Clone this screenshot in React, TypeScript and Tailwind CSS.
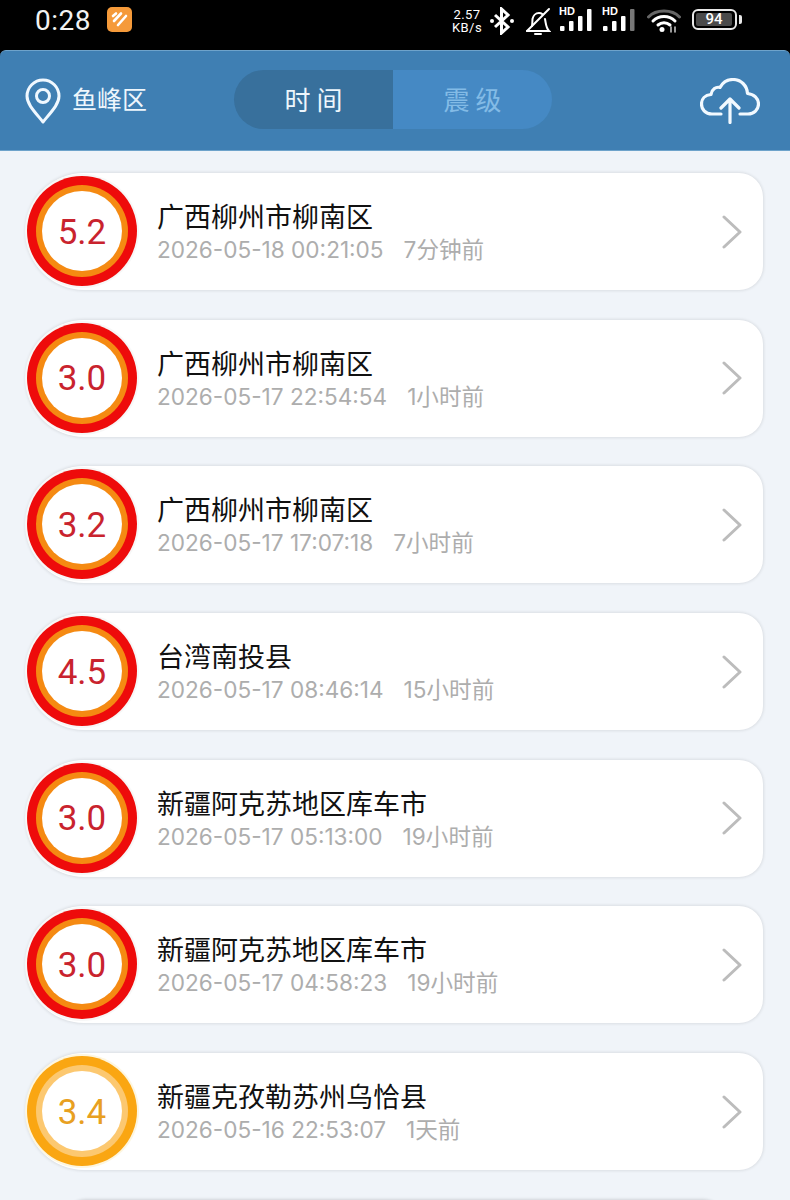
import React from "react";

const FONT = "font-['Roboto','Noto_Sans_CJK_SC',sans-serif]";

type Quake = {
  mag: string;
  place: string;
  time: string;
  ago: string;
  level: "red" | "amber";
};

const quakes: Quake[] = [
  { mag: "5.2", place: "广西柳州市柳南区", time: "2026-05-18 00:21:05", ago: "7分钟前", level: "red" },
  { mag: "3.0", place: "广西柳州市柳南区", time: "2026-05-17 22:54:54", ago: "1小时前", level: "red" },
  { mag: "3.2", place: "广西柳州市柳南区", time: "2026-05-17 17:07:18", ago: "7小时前", level: "red" },
  { mag: "4.5", place: "台湾南投县", time: "2026-05-17 08:46:14", ago: "15小时前", level: "red" },
  { mag: "3.0", place: "新疆阿克苏地区库车市", time: "2026-05-17 05:13:00", ago: "19小时前", level: "red" },
  { mag: "3.0", place: "新疆阿克苏地区库车市", time: "2026-05-17 04:58:23", ago: "19小时前", level: "red" },
  { mag: "3.4", place: "新疆克孜勒苏州乌恰县", time: "2026-05-16 22:53:07", ago: "1天前", level: "amber" },
];

const Signal = ({ dim }: { dim?: boolean }) => (
  <div className="relative w-[36px] h-[26px]">
    <span className="absolute left-0 -top-[1px] text-[11px] leading-[11px] font-bold text-white font-['Liberation_Sans',sans-serif]">HD</span>
    <svg viewBox="0 0 36 26" className="absolute inset-0 w-full h-full">
      <rect x="1" y="19" width="4.500" height="5" rx="1" fill="#fff" />
      <rect x="10" y="14" width="4.500" height="10" rx="1" fill="#fff" />
      <rect x="19" y="9" width="4.500" height="15" rx="1" fill="#fff" />
      <rect x="28" y="2" width="4.500" height="22" rx="1" fill={dim ? "#777" : "#fff"} />
    </svg>
  </div>
);

const StatusBar = () => (
  <div className="h-[50px] bg-black flex items-start pl-[35px] pr-[48px] pt-[7px]">
    <span className="text-[28px] leading-[28px] text-[#f2f2f2] tracking-[0.5px] w-[72px]">0:28</span>
    <div className="w-[25px] h-[25px] rounded-[5px] bg-[#f59a3a] flex items-center justify-center">
      <svg viewBox="0 0 25 25" className="w-[25px] h-[25px]" fill="none" stroke="#fff" strokeWidth="2.6" strokeLinecap="round">
        <path d="M6 9 9 6.500M7 14l7-7.500M11 18l8-9" />
      </svg>
    </div>
    <div className="ml-auto flex items-start">
      <div className="text-[13px] leading-[13px] tracking-[0.4px] text-white text-center mr-[7px] mt-[1px]">
        <div>2.57</div>
        <div>KB/s</div>
      </div>
      <svg viewBox="0 0 26 28" className="w-[26px] h-[28px] mr-[10px]" fill="none" stroke="#fff" strokeWidth="3">
        <path d="M6 8l13 12-6.500 6V2L19 8 6 20" />
        <circle cx="3" cy="14" r="2" fill="#fff" stroke="none" />
        <circle cx="23" cy="14" r="2" fill="#fff" stroke="none" />
      </svg>
      <svg viewBox="0 0 26 28" className="w-[26px] h-[28px] mr-[8px]" fill="none" stroke="#fff" strokeWidth="2" strokeLinecap="round">
        <path d="M2 24h22c-3-3-3-7-4-12M7 19c.5-3 .3-5 .5-7 .5-3 3-6 6.500-6 1.500 0 2.500.4 3.500 1.200" />
        <path d="M10 27h6" />
        <path d="M2 24 24 2" />
      </svg>
      <div className="flex gap-[7px] mr-[9px]">
        <Signal />
        <Signal dim />
      </div>
      <svg viewBox="0 0 34 26" className="w-[34px] h-[26px] mr-[11px]" fill="none" strokeLinecap="round">
        <path d="M1.500 10C9 2 25 2 32.500 10" stroke="#666" strokeWidth="3" />
        <path d="M6 14c6-6 16-6 22 0" stroke="#fff" strokeWidth="3" />
        <path d="M11 18c3.500-3 8.500-3 12 0" stroke="#fff" strokeWidth="3" />
        <circle cx="15" cy="22.500" r="2.500" fill="#fff" />
        <path d="M24 20v5M28 25v-5" stroke="#ccc" strokeWidth="1.500" />
      </svg>
      <div className="flex items-center mt-[2px]">
        <div className="w-[45px] h-[21px] rounded-[6px] border-2 border-[#e8e8e8] p-[2px]">
          <div className="w-[36px] h-full rounded-[2px] bg-[#4a4a4a] flex items-center justify-center text-[15px] leading-none font-medium text-white">
            94
          </div>
        </div>
        <div className="w-[3px] h-[9px] ml-[2px] rounded-r-[2px] bg-[#e8e8e8]" />
      </div>
    </div>
  </div>
);

const Header = () => (
  <div className="h-[101px] bg-black">
    <div className="h-[101px] rounded-t-[6px] bg-[#3f7fb3] border-y border-[#6ea3cb] flex items-center pl-[25px] pr-[30px]">
      <div className="flex items-center w-[209px]">
        <svg viewBox="0 0 36 46" className="w-[36px] h-[46px] shrink-0" fill="none" stroke="#f0f8ff" strokeWidth="3">
          <path d="M18 44C9 33 2 26 2 18a16 16 0 0 1 32 0c0 8-7 15-16 26Z" strokeLinejoin="round" />
          <circle cx="18" cy="18" r="6.500" />
        </svg>
        <span className="ml-[11px] text-[25px] leading-none text-[#eef6fc]">鱼峰区</span>
      </div>
      <div className="flex w-[318px] h-[59px] -mt-[2px]">
        <div className="w-[159px] pl-[6px] pt-[3px] rounded-l-[30px] bg-[#38709c] flex items-center justify-center text-[26px] tracking-[6px] text-[#eef6fc]">
          时间
        </div>
        <div className="w-[159px] pl-[6px] pt-[3px] rounded-r-[30px] bg-[#4589c4] flex items-center justify-center text-[26px] tracking-[6px] text-[#83bbe6]">
          震级
        </div>
      </div>
      <svg viewBox="0 0 60 46" className="ml-auto w-[60px] h-[46px]" fill="none" stroke="#f2f9ff" strokeWidth="3.200" strokeLinecap="round" strokeLinejoin="round">
        <path d="M21 36H12C5 36 1.500 31 1.500 26S5 17 11 16.500C12 11 16 8.500 20 9.500 23 4 27 1.500 33 1.500c8 0 14 6 14.500 14C54 16 58.500 20.500 58.500 26S54 36 48 36h-8" />
        <path d="M30 44.500V21M21 30l9-9 9 9" />
      </svg>
    </div>
  </div>
);

const Badge = ({ mag, level }: { mag: string; level: Quake["level"] }) => {
  const red = level === "red";
  return (
    <div
      className={`absolute -left-[1px] top-[1px] w-[114px] h-[114px] rounded-full p-[2px] ${red ? "bg-[#f7f7f7]" : "bg-[#fdf6e0]"}`}
    >
      <div className={`w-full h-full rounded-full p-[9px] ${red ? "bg-[#ee0b0b]" : "bg-[#faa612]"}`}>
        <div className={`w-full h-full rounded-full p-[6px] ${red ? "bg-[#f58a12]" : "bg-[#fcc870]"}`}>
          <div
            className={`w-full h-full rounded-full bg-white pt-[2px] flex items-center justify-center text-[35px] leading-none ${red ? "text-[#c9232e]" : "text-[#e8a021]"}`}
          >
            {mag}
          </div>
        </div>
      </div>
    </div>
  );
};

const Row = ({ q }: { q: Quake }) => (
  <div className="relative h-[117px] rounded-[24px] rounded-l-[58px] bg-white shadow-[0_0_3px_1px_rgba(0,0,0,0.09)] flex items-center pl-[131px] pr-[21px]">
    <Badge mag={q.mag} level={q.level} />
    <div className="flex-1 min-w-0 pt-[3px]">
      <div className="text-[27px] leading-[34px] text-[#111]">{q.place}</div>
      <div className="flex items-center gap-[20px] leading-[30px] text-[#adadad] font-['Inter','Noto_Sans_CJK_SC',sans-serif]">
        <span className="text-[22.6px]">{q.time}</span>
        <span className="text-[22.6px]">{q.ago}</span>
      </div>
    </div>
    <svg viewBox="0 0 20 34" className="w-[20px] h-[34px]" fill="none" stroke="#bcbcbc" strokeWidth="3" strokeLinecap="round" strokeLinejoin="round">
      <path d="M2 2l16 15L2 32" />
    </svg>
  </div>
);

export default function App() {
  return (
    <div className={`w-[790px] h-[1200px] overflow-hidden bg-[#f0f4f9] ${FONT}`}>
      <StatusBar />
      <Header />
      <div className="flex flex-col gap-[29.7px] pt-[22px] pl-[26px] pr-[27px]">
        {quakes.map((q, i) => (
          <Row key={i} q={q} />
        ))}
        <div className="mx-[40px] h-[40px] rounded-t-[20px] bg-white shadow-[0_0_3px_1px_rgba(0,0,0,0.13)]" />
      </div>
    </div>
  );
}
